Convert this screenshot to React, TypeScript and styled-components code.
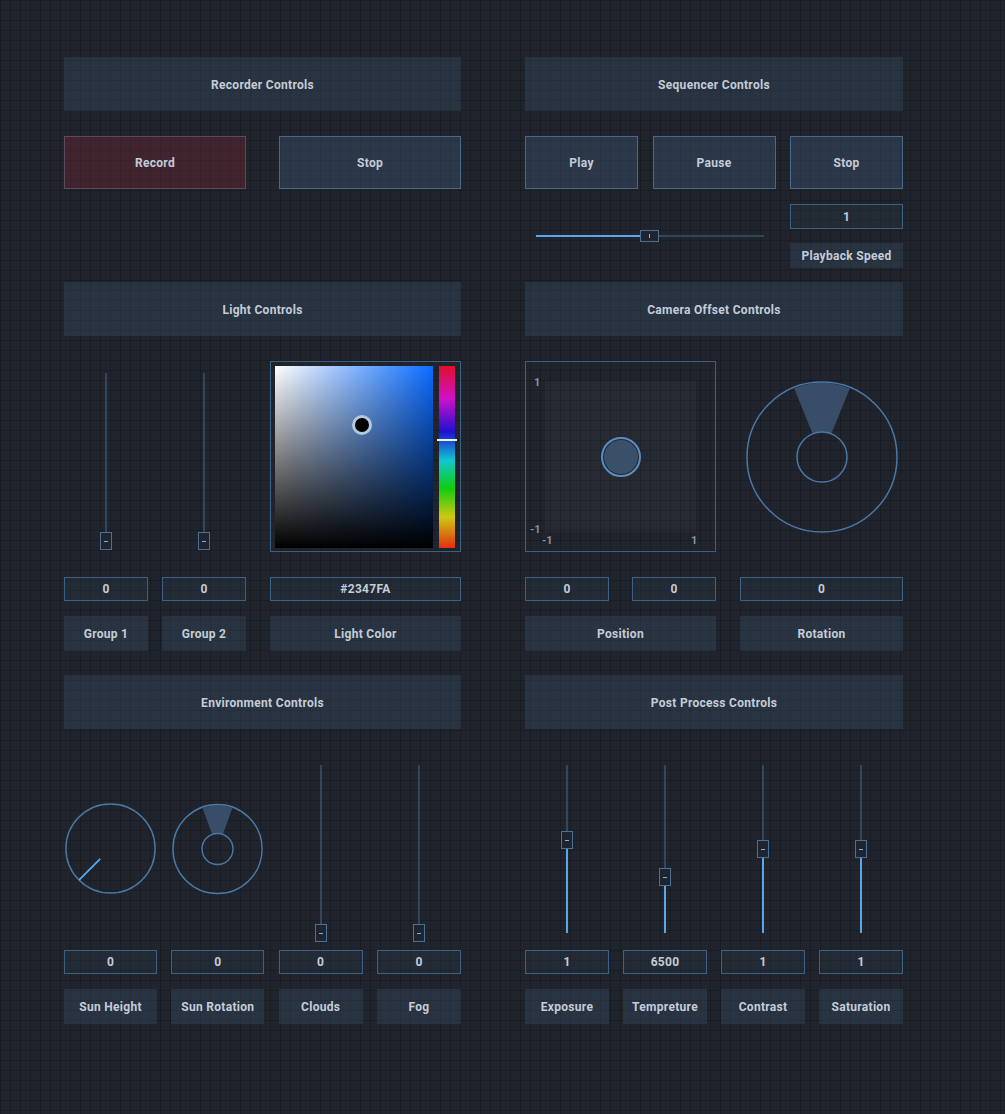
import styled, { createGlobalStyle } from "styled-components";

const GlobalStyle = createGlobalStyle`
  html, body {
    margin: 0;
    padding: 0;
  }
  body {
    min-height: 1114px;
    background-color: #20242c;
    background-image:
      linear-gradient(rgba(0, 0, 0, 0.2) 1px, transparent 1px),
      linear-gradient(90deg, rgba(0, 0, 0, 0.2) 1px, transparent 1px);
    background-size: 10px 10px;
    font-family: Roboto, "Liberation Sans", sans-serif;
  }
`;

const BLUE = "#5aa6ec";
const LINE = "#4a78a6";

const Page = styled.div`
  display: flex;
  flex-direction: column;
  padding: 57px 0 0 64px;
`;

const Row = styled.div<{ $after?: number }>`
  display: grid;
  grid-template-columns: 397px 378px;
  column-gap: 64px;
  align-items: start;
  margin-bottom: ${({ $after }) => $after ?? 0}px;
`;

const Section = styled.section`
  display: flex;
  flex-direction: column;
`;

const text = `
  font-weight: 700;
  font-size: 12px;
  letter-spacing: 0.3px;
  color: #c4ccd8;
`;

const Header = styled.div`
  ${text}
  height: 54px;
  padding-top: 1px;
  box-sizing: border-box;
  display: flex;
  align-items: center;
  justify-content: center;
  background: rgba(62, 88, 118, 0.3);
`;

const Content = styled.div<{ $top: number }>`
  margin-top: ${({ $top }) => $top}px;
`;

const TwoButtons = styled.div`
  display: grid;
  grid-template-columns: 182px 182px;
  justify-content: space-between;
`;

const SeqButtons = styled.div`
  display: grid;
  grid-template-columns: 113px 123px 113px;
  justify-content: space-between;
`;

const Button = styled.button<{ $record?: boolean }>`
  ${text}
  height: 53px;
  font-family: inherit;
  background: ${({ $record }) => ($record ? "rgba(104, 40, 50, 0.45)" : "rgba(62, 90, 122, 0.38)")};
  border: 1px solid ${({ $record }) => ($record ? "#5b4a5e" : "#48698c")};
  cursor: pointer;
`;

const SpeedRow = styled.div`
  display: grid;
  grid-template-columns: 1fr 113px;
  column-gap: 14px;
  margin-top: 15px;
`;

const SliderCell = styled.div`
  display: flex;
  align-items: center;
  padding: 0 12px 0 11px;
`;

const Stack = styled.div<{ $gap: number }>`
  display: flex;
  flex-direction: column;
  gap: ${({ $gap }) => $gap}px;
`;

const ValueBox = styled.div<{ $h?: number }>`
  ${text}
  height: ${({ $h }) => $h ?? 24}px;
  box-sizing: border-box;
  display: flex;
  align-items: center;
  justify-content: center;
  background: rgba(40, 56, 74, 0.35);
  border: 1px solid #3e6082;
`;

const Label = styled.div<{ $h?: number }>`
  ${text}
  height: ${({ $h }) => $h ?? 35}px;
  display: flex;
  align-items: center;
  justify-content: center;
  background: rgba(62, 88, 118, 0.3);
`;

const ControlGrid = styled.div<{ $cols: string; $gap?: number }>`
  display: grid;
  grid-template-columns: ${({ $cols }) => $cols};
  column-gap: ${({ $gap }) => $gap ?? 0}px;
  justify-content: space-between;
`;

const Column = styled.div<{ $valueTop: number; $width?: number }>`
  display: flex;
  flex-direction: column;
  ${({ $width }) => ($width ? `width: ${$width}px; justify-self: end;` : "")}
  & > ${ValueBox} {
    margin-top: ${({ $valueTop }) => $valueTop}px;
  }
  & > ${Label} {
    margin-top: 15px;
  }
`;

const ControlArea = styled.div`
  position: relative;
  height: 191px;
  display: flex;
  align-items: center;
  justify-content: center;
`;

/* vertical slider */
const VTrack = styled.div`
  position: absolute;
  left: 50%;
  top: 12px;
  width: 2px;
  height: 168px;
  margin-left: -1px;
  background: #33465b;
`;

const VFill = styled.div`
  position: absolute;
  left: 0;
  bottom: 0;
  width: 2px;
  background: ${BLUE};
`;

const Thumb = styled.div<{ $vertical?: boolean }>`
  position: absolute;
  box-sizing: border-box;
  width: ${({ $vertical }) => ($vertical ? 12 : 19)}px;
  height: ${({ $vertical }) => ($vertical ? 18 : 12)}px;
  background: #1e252f;
  border: 1px solid #4a7094;
  display: flex;
  align-items: center;
  justify-content: center;
  &::after {
    content: "";
    width: ${({ $vertical }) => ($vertical ? 4 : 1)}px;
    height: ${({ $vertical }) => ($vertical ? 1 : 4)}px;
    background: #7fb0de;
  }
`;

const VSlider = ({ value }: { value: number }) => {
  const pos = 168 * value;
  return (
    <ControlArea>
      <VTrack>
        <VFill style={{ height: pos }} />
        <Thumb $vertical style={{ left: -5, bottom: pos - 9 }} />
      </VTrack>
    </ControlArea>
  );
};

/* horizontal slider */
const HTrack = styled.div`
  position: relative;
  flex: 1;
  height: 2px;
  background: #33465b;
`;

const HFill = styled.div`
  position: absolute;
  left: 0;
  top: 0;
  height: 2px;
  background: ${BLUE};
`;

const HSlider = ({ value }: { value: number }) => (
  <HTrack>
    <HFill style={{ width: `${value * 100}%` }} />
    <Thumb style={{ left: `calc(${value * 100}% - 10px)`, top: -5 }} />
  </HTrack>
);

/* colour picker */
const PickerBox = styled.div`
  box-sizing: border-box;
  width: 191px;
  height: 191px;
  border: 1px solid #3e6082;
  padding: 4px 5px 3px 4px;
  display: flex;
  gap: 6px;
`;

const SVArea = styled.div<{ $hue: string }>`
  position: relative;
  width: 158px;
  height: 182px;
  background:
    linear-gradient(to top, #000, rgba(0, 0, 0, 0)),
    linear-gradient(to right, #fff, ${({ $hue }) => $hue});
`;

const SVCursor = styled.div`
  position: absolute;
  width: 14px;
  height: 14px;
  margin: -10px 0 0 -10px;
  border-radius: 50%;
  background: #000;
  border: 3px solid #b4c8e0;
`;

const HueBar = styled.div`
  position: relative;
  width: 16px;
  height: 182px;
  background: linear-gradient(
    to bottom,
    #e0102a 0%,
    #d010c8 18%,
    #2010d0 36%,
    #10c8d0 52%,
    #10cc10 67%,
    #d0c810 83%,
    #e03010 100%
  );
`;

const HueMark = styled.div`
  position: absolute;
  left: -2px;
  right: -2px;
  height: 2px;
  margin-top: -1px;
  background: #f0f4f8;
`;

const ColorPicker = () => (
  <PickerBox>
    <SVArea $hue="#0a6cff">
      <SVCursor style={{ left: "55%", top: "32.5%" }} />
    </SVArea>
    <HueBar>
      <HueMark style={{ top: "40.5%" }} />
    </HueBar>
  </PickerBox>
);

/* xy pad */
const PadBox = styled.div`
  position: relative;
  box-sizing: border-box;
  width: 191px;
  height: 191px;
  border: 1px solid #3e6082;
  padding: 19px;
`;

const PadInner = styled.div`
  width: 100%;
  height: 100%;
  background: rgba(70, 90, 110, 0.12);
  display: flex;
  align-items: center;
  justify-content: center;
`;

const PadHandle = styled.div`
  box-sizing: border-box;
  width: 40px;
  height: 40px;
  border-radius: 50%;
  border: 2px solid #5a8cc0;
  background: #3a5069;
  box-shadow: inset 0 0 0 1px #1e2630;
`;

const AxisLabel = styled.span`
  position: absolute;
  font-weight: 700;
  font-size: 11px;
  color: #8a929c;
  line-height: 1;
`;

const XYPad = () => (
  <PadBox>
    <PadInner>
      <PadHandle />
    </PadInner>
    <AxisLabel style={{ left: 8, top: 15 }}>1</AxisLabel>
    <AxisLabel style={{ left: 4, top: 162 }}>-1</AxisLabel>
    <AxisLabel style={{ left: 16, top: 173 }}>-1</AxisLabel>
    <AxisLabel style={{ left: 165, top: 173 }}>1</AxisLabel>
  </PadBox>
);

/* dials */
const polar = (cx: number, cy: number, r: number, deg: number) => {
  const a = (deg * Math.PI) / 180;
  return [cx + r * Math.sin(a), cy - r * Math.cos(a)];
};

const RotationDial = ({ r, inner, spread }: { r: number; inner: number; spread: number }) => {
  const size = r * 2 + 4;
  const c = size / 2;
  const [ilx, ily] = polar(c, c, inner, -spread);
  const [irx, iry] = polar(c, c, inner, spread);
  const [olx, oly] = polar(c, c, r - 1, -spread);
  const [orx, ory] = polar(c, c, r - 1, spread);
  const wedge = `M${ilx} ${ily} L${olx} ${oly} A${r - 1} ${r - 1} 0 0 1 ${orx} ${ory} L${irx} ${iry} A${inner} ${inner} 0 0 0 ${ilx} ${ily} Z`;
  return (
    <svg width={size} height={size} viewBox={`0 0 ${size} ${size}`}>
      <path d={wedge} fill="#3d5673" fillOpacity={0.85} />
      <circle cx={c} cy={c} r={r} fill="none" stroke={LINE} strokeWidth={1.5} />
      <circle cx={c} cy={c} r={inner} fill="none" stroke={LINE} strokeWidth={1.5} />
    </svg>
  );
};

const Knob = ({ r, angle }: { r: number; angle: number }) => {
  const size = r * 2 + 4;
  const c = size / 2;
  const [x1, y1] = polar(c, c, 16, angle);
  const [x2, y2] = polar(c, c, r - 1, angle);
  return (
    <svg width={size} height={size} viewBox={`0 0 ${size} ${size}`}>
      <circle cx={c} cy={c} r={r} fill="none" stroke={LINE} strokeWidth={1.5} />
      <line x1={x1} y1={y1} x2={x2} y2={y2} stroke={BLUE} strokeWidth={2} strokeLinecap="round" />
    </svg>
  );
};

const CameraRight = styled.div`
  display: grid;
  grid-template-columns: 191px 163px;
  justify-content: space-between;
`;

const PairRow = styled.div`
  display: grid;
  grid-template-columns: 84px 84px;
  justify-content: space-between;
  margin-top: 25px;
`;

const App = () => (
  <>
    <GlobalStyle />
    <Page>
      <Row $after={14}>
        <Section>
          <Header>Recorder Controls</Header>
          <Content $top={25}>
            <TwoButtons>
              <Button $record>Record</Button>
              <Button>Stop</Button>
            </TwoButtons>
          </Content>
        </Section>
        <Section>
          <Header>Sequencer Controls</Header>
          <Content $top={25}>
            <SeqButtons>
              <Button>Play</Button>
              <Button>Pause</Button>
              <Button>Stop</Button>
            </SeqButtons>
            <SpeedRow>
              <SliderCell>
                <HSlider value={0.5} />
              </SliderCell>
              <Stack $gap={14}>
                <ValueBox $h={25}>1</ValueBox>
                <Label $h={25}>Playback Speed</Label>
              </Stack>
            </SpeedRow>
          </Content>
        </Section>
      </Row>

      <Row $after={24}>
        <Section>
          <Header>Light Controls</Header>
          <Content $top={25}>
            <ControlGrid $cols="84px 84px 1fr" $gap={14}>
              <Column $valueTop={25}>
                <VSlider value={0} />
                <ValueBox>0</ValueBox>
                <Label>Group 1</Label>
              </Column>
              <Column $valueTop={25}>
                <VSlider value={0} />
                <ValueBox>0</ValueBox>
                <Label>Group 2</Label>
              </Column>
              <Column $valueTop={25} $width={191}>
                <ColorPicker />
                <ValueBox>#2347FA</ValueBox>
                <Label>Light Color</Label>
              </Column>
            </ControlGrid>
          </Content>
        </Section>
        <Section>
          <Header>Camera Offset Controls</Header>
          <Content $top={25}>
            <CameraRight>
              <Column $valueTop={25}>
                <XYPad />
                <PairRow>
                  <ValueBox>0</ValueBox>
                  <ValueBox>0</ValueBox>
                </PairRow>
                <Label>Position</Label>
              </Column>
              <Column $valueTop={25}>
                <ControlArea>
                  <RotationDial r={75} inner={25} spread={22} />
                </ControlArea>
                <ValueBox>0</ValueBox>
                <Label>Rotation</Label>
              </Column>
            </CameraRight>
          </Content>
        </Section>
      </Row>

      <Row>
        <Section>
          <Header>Environment Controls</Header>
          <Content $top={24}>
            <ControlGrid $cols="93px 93px 84px 84px">
              <Column $valueTop={6}>
                <ControlArea>
                  <Knob r={46.5} angle={225} />
                </ControlArea>
                <ValueBox>0</ValueBox>
                <Label>Sun Height</Label>
              </Column>
              <Column $valueTop={6}>
                <ControlArea>
                  <RotationDial r={46} inner={16} spread={20} />
                </ControlArea>
                <ValueBox>0</ValueBox>
                <Label>Sun Rotation</Label>
              </Column>
              <Column $valueTop={6}>
                <VSlider value={0} />
                <ValueBox>0</ValueBox>
                <Label>Clouds</Label>
              </Column>
              <Column $valueTop={6}>
                <VSlider value={0} />
                <ValueBox>0</ValueBox>
                <Label>Fog</Label>
              </Column>
            </ControlGrid>
          </Content>
        </Section>
        <Section>
          <Header>Post Process Controls</Header>
          <Content $top={24}>
            <ControlGrid $cols="84px 84px 84px 84px">
              <Column $valueTop={6}>
                <VSlider value={0.553} />
                <ValueBox>1</ValueBox>
                <Label>Exposure</Label>
              </Column>
              <Column $valueTop={6}>
                <VSlider value={0.333} />
                <ValueBox>6500</ValueBox>
                <Label>Tempreture</Label>
              </Column>
              <Column $valueTop={6}>
                <VSlider value={0.5} />
                <ValueBox>1</ValueBox>
                <Label>Contrast</Label>
              </Column>
              <Column $valueTop={6}>
                <VSlider value={0.5} />
                <ValueBox>1</ValueBox>
                <Label>Saturation</Label>
              </Column>
            </ControlGrid>
          </Content>
        </Section>
      </Row>
    </Page>
  </>
);

export default App;
